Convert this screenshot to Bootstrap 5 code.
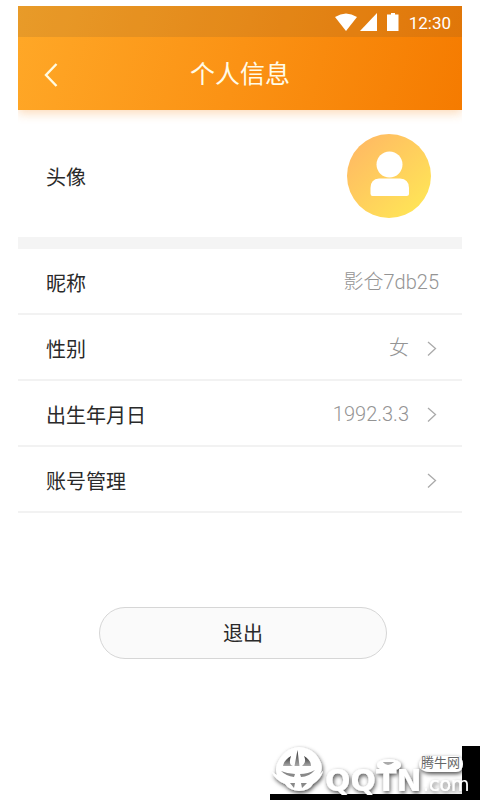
<!DOCTYPE html>
<html lang="zh-CN">
<head>
<meta charset="utf-8">
<meta name="viewport" content="width=device-width, initial-scale=1">
<title>个人信息</title>
<link href="https://cdn.jsdelivr.net/npm/bootstrap@5.3.0/dist/css/bootstrap.min.css" rel="stylesheet">
<style>
  body { font-family: "Liberation Sans", "Noto Sans CJK SC", sans-serif; background: #fff; color: #2a2a2a; font-size: 20px; line-height: 24px; }
  .screen { margin: 6px 18px 0; }
  .app-head { background: linear-gradient(105deg, #ffa827 0%, #fb9214 50%, #f57b00 100%); box-shadow: 0 3px 10px rgba(250, 140, 30, .32); clip-path: inset(0 0 -20px 0); }
  .status { height: 31px; background: rgba(90, 80, 60, .14); font-size: 17px; padding: 3px 11px 0 0; }
  .status span { font-family: Roboto, "Liberation Sans", sans-serif; font-weight: 400; }
  .title-bar { height: 73px; padding: 0 25px; }
  .title-bar h1 { font-size: 25px; line-height: 30px; color: #fffbe8; }
  .side { width: 32px; }
  .avatar-row { height: 127px; padding: 5px 31px 0 28px; }
  .band { height: 12px; background: #f4f4f4; }
  .info-row { height: 66px; padding: 0 23px 0 28px; border-bottom: 2px solid #f2f2f2; color: inherit; }
  .info-label { padding-top: 5px; }
  .avatar-row .info-label { padding-top: 4px; }
  .info-value { color: #949494; font-family: Roboto, "Noto Sans CJK SC", sans-serif; font-weight: 300; padding-top: 1px; }
  .go { margin-left: 17px; margin-right: 1px; margin-top: 4px; }
  .exit-wrap { padding: 94px 75px 0 81px; }
  .exit { height: 52px; padding: 8px 0 6px; font-size: 20px; background: #fafafa; border-color: #d6d6d6; color: #2a2a2a; }
  .site-mark { right: 0; bottom: 0; width: 220px; height: 60px; }
</style>
<script src="https://cdn.jsdelivr.net/npm/bootstrap@5.3.0/dist/js/bootstrap.bundle.min.js"></script>
</head>
<body class="position-relative min-vh-100">
<main class="screen">
  <header class="app-head text-white">
    <div class="status d-flex align-items-center justify-content-end">
      <svg class="me-2" width="66" height="20" viewBox="0 0 66 20" fill="#fff" aria-hidden="true">
        <path d="M0 4Q11-3 22 4L11 18Z"/><path d="M42 0V18H25Z"/><path d="M56 0h4v1.500h3.500V18H52V1.500H56Z"/>
      </svg>
      <span>12:30</span>
    </div>
    <div class="title-bar d-flex align-items-center justify-content-between">
      <button type="button" class="btn border-0 p-0 side d-flex" aria-label="返回">
        <svg width="16" height="26" viewBox="0 0 16 26" fill="none" stroke="#fffbe2" stroke-width="2.400" aria-hidden="true"><path d="M13.500 3L3 14L13.500 25"/></svg>
      </button>
      <h1 class="m-0 fw-normal">个人信息</h1>
      <span class="side"></span>
    </div>
  </header>

  <section class="avatar-row d-flex align-items-center justify-content-between">
    <span class="info-label">头像</span>
    <svg width="84" height="84" viewBox="0 0 84 84" role="img" aria-label="头像">
      <defs><linearGradient id="sun" x1="0.100" y1="0.100" x2="0.850" y2="0.900"><stop offset="0" stop-color="#ffba63"/><stop offset="1" stop-color="#ffe457"/></linearGradient></defs>
      <circle cx="42" cy="42" r="42" fill="url(#sun)"/>
      <circle cx="42.500" cy="30.500" r="13" fill="#fff"/>
      <path d="M32 44.500H53Q62 45 62 54V59.500Q62 62 59.500 62H25.500Q23.500 62 23.500 59.500V54Q23.500 45 32 44.500Z" fill="#fff"/>
    </svg>
  </section>
  <div class="band"></div>

  <section>
    <div class="info-row d-flex align-items-center">
      <span class="info-label me-auto">昵称</span><span class="info-value">影仓7db25</span>
    </div>
    <a href="#" class="info-row d-flex align-items-center text-decoration-none">
      <span class="info-label me-auto">性别</span><span class="info-value">女</span>
      <svg class="go" width="12" height="16" viewBox="0 0 12 16" fill="none" stroke="#aaa" stroke-width="1.300" aria-hidden="true"><path d="M2 1L9.500 7.500L2 14.500"/></svg>
    </a>
    <a href="#" class="info-row d-flex align-items-center text-decoration-none">
      <span class="info-label me-auto">出生年月日</span><span class="info-value">1992.3.3</span>
      <svg class="go" width="12" height="16" viewBox="0 0 12 16" fill="none" stroke="#aaa" stroke-width="1.300" aria-hidden="true"><path d="M2 1L9.500 7.500L2 14.500"/></svg>
    </a>
    <a href="#" class="info-row d-flex align-items-center text-decoration-none">
      <span class="info-label me-auto">账号管理</span>
      <svg class="go" width="12" height="16" viewBox="0 0 12 16" fill="none" stroke="#aaa" stroke-width="1.300" aria-hidden="true"><path d="M2 1L9.500 7.500L2 14.500"/></svg>
    </a>
  </section>

  <div class="exit-wrap">
    <button type="button" class="exit btn rounded-pill w-100">退出</button>
  </div>
</main>

<svg class="site-mark position-absolute" viewBox="0 0 220 60" role="img" aria-label="腾牛网 QQTN.com">
  <defs>
    <filter id="soft" x="-10%" y="-20%" width="120%" height="150%"><feDropShadow dx="1" dy="2" stdDeviation="2" flood-color="#000" flood-opacity=".7"/></filter>
    <linearGradient id="horn" x1="0" y1="0" x2="0" y2="1"><stop offset="0" stop-color="#333"/><stop offset="1" stop-color="#aaa"/></linearGradient>
  </defs>
  <path d="M202 6H220V60H10V54H202Z" fill="#000"/>
  <g filter="url(#soft)" fill="#fff">
    <path d="M17 24Q24 8 39 7Q55 8 61 23Q63 30 60 34L63 31Q61 39 53 44Q49 51 39 51Q29 50 25 44Q15 40 12 32L17 35Q15 30 17 24Z"/>
    <ellipse cx="129" cy="25" rx="12" ry="6"/>
    <path d="M164 16H196Q203 17 203 24Q203 31 196 32H170Q164 32 160 28Q157 23 164 16Z"/>
    <text x="65" y="51" font-family="DejaVu Sans, sans-serif" font-weight="700" font-size="30">QQTN</text>
    <text x="163" y="51" font-family="DejaVu Sans, sans-serif" font-size="19">.com</text>
  </g>
  <path d="M37.500 10L34.500 26H39.500Z" fill="url(#horn)"/>
  <path d="M31 16Q24 20 23 26H33Q28 25 31 16ZM44 16Q47 22 42 26H51Q51 20 44 16Z" fill="url(#horn)"/>
  <path d="M21 31Q28 34 35 34L34 37Q26 36 21 31ZM40 34Q48 34 55 30Q49 37 41 37ZM30 43H35L34 48ZM41 43H47L42 48Z" fill="#888"/>
  <path d="M123 22H134Q131 25 128 25Q125 25 123 22Z" fill="#aaa"/>
  <text x="161" y="27" font-family="Noto Sans CJK SC, sans-serif" font-size="13" fill="#666">腾牛网</text>
</svg>
</body>
</html>
